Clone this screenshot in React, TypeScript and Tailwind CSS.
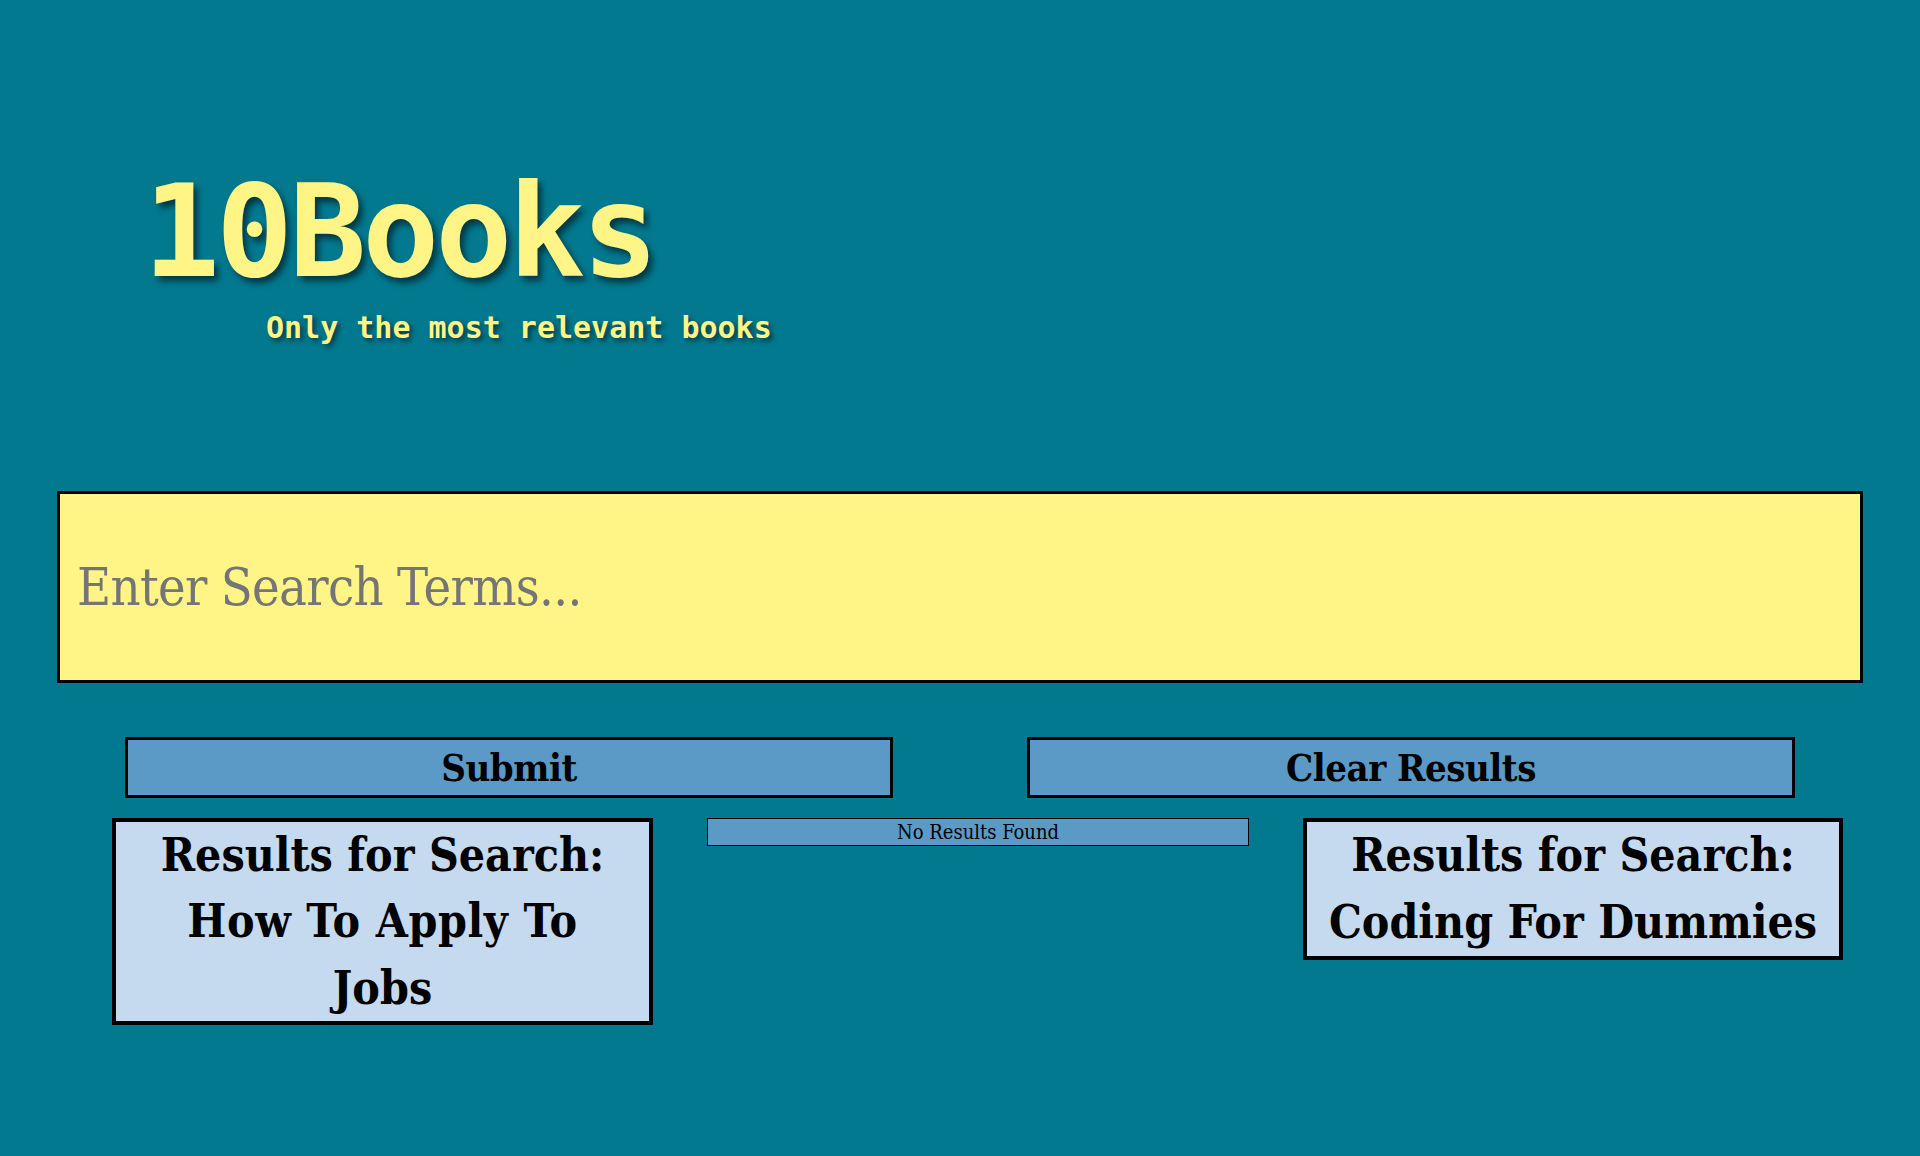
export default function App() {
  const slab = "font-['DejaVu_Serif_Condensed','DejaVu_Serif',serif] [font-stretch:condensed]";
  const mono = "font-['DejaVu_Sans_Mono',monospace]";
  return (
    <div className="min-h-[1156px] w-full bg-[#02798f] pb-[120px]">
      <header className="pl-[143px] pt-[168px]">
        <h1
          className={`${mono} slashed-zero text-[128px] leading-none font-bold tracking-[-4px] text-[#fff587] [text-shadow:4px_5px_6px_rgba(0,0,0,0.55)]`}
        >
          10Books
        </h1>
        <p
          className={`${mono} ml-[123px] mt-[17px] text-[30px] leading-none font-bold text-[#fff587] [text-shadow:3px_3px_5px_rgba(0,0,0,0.55)]`}
        >
          Only the most relevant books
        </p>
      </header>

      <div className="mt-[148px] flex justify-center">
        <input
          type="text"
          placeholder="Enter Search Terms..."
          className={`${slab} h-[192px] w-[1806px] border-[3px] border-black bg-[#fff587] px-[17px] text-[52px] tracking-[-0.7px] text-black outline-none placeholder:text-[#757575]`}
        />
      </div>

      <div className="mt-[54px] flex gap-[134px] pl-[125px]">
        <button
          className={`${slab} h-[61px] w-[768px] border-[3px] border-black bg-[#5b9ac6] text-[38px] font-bold leading-none tracking-[-0.5px] text-black`}
        >
          Submit
        </button>
        <button
          className={`${slab} h-[61px] w-[768px] border-[3px] border-black bg-[#5b9ac6] text-[38px] font-bold leading-none tracking-[-0.5px] text-black`}
        >
          Clear Results
        </button>
      </div>

      <div className="mt-[20px] flex items-start pl-[112px]">
        <div
          className={`${slab} w-[541px] border-4 border-black bg-[#c5daef] text-center text-[46px] font-bold leading-[66.3px] text-black`}
        >
          Results for Search: <span className="tracking-[0.6px]">How To Apply To</span>
          <br />
          Jobs
        </div>
        <div
          className={`${slab} ml-[54px] h-[28px] w-[542px] border border-black bg-[#5b9ac6] text-center text-[20px] leading-[26px] text-black`}
        >
          No Results Found
        </div>
        <div
          className={`${slab} ml-[54px] w-[540px] border-4 border-black bg-[#c5daef] text-center text-[46px] font-bold leading-[67px] text-black`}
        >
          Results for Search: Coding For Dummies
        </div>
      </div>
    </div>
  );
}
